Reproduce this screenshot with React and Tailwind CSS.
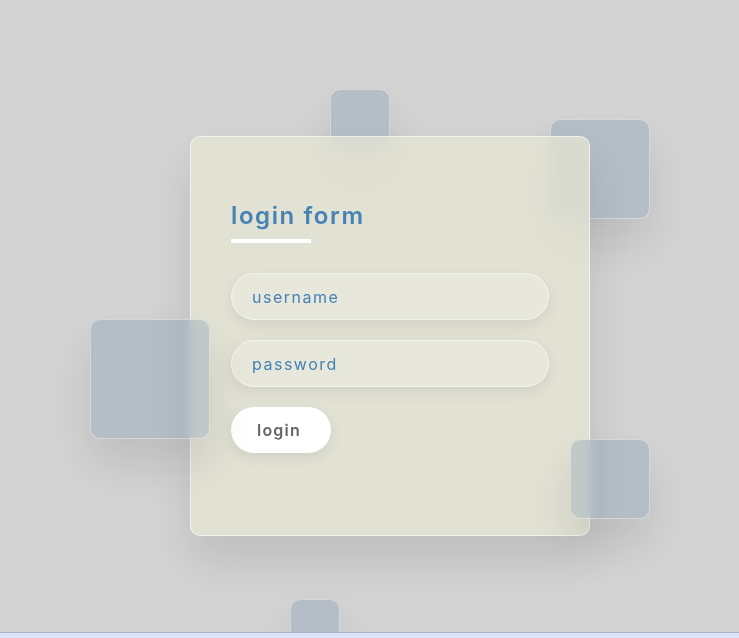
import React from 'react';

const font = { fontFamily: 'Inter, "Noto Sans", sans-serif' };

const Square = ({ className }) => (
  <div
    className={`absolute rounded-[10px] border border-white/40 bg-[rgba(70,115,150,0.21)] shadow-[0_25px_45px_rgba(0,0,0,0.1)] backdrop-blur-[5px] ${className}`}
  />
);

const fieldClass =
  'h-[47px] w-full rounded-[35px] border border-white/50 bg-white/20 px-5 text-[16px] tracking-[1.5px] text-[#4682b4] shadow-[0_5px_15px_rgba(0,0,0,0.08)] outline-none placeholder:text-[#4682b4]';

export default function App() {
  return (
    <div className="flex h-[638px] w-full flex-col bg-[#d3d3d3]" style={font}>
      <div className="relative flex-1 overflow-hidden">
        <div className="relative ml-[190px] mt-[136px] h-[400px] w-[400px]">
          {/* squares behind the card */}
          <Square className="left-[140px] top-[-47px] h-[60px] w-[60px]" />
          <Square className="left-[360px] top-[-17px] h-[100px] w-[100px]" />

          <div className="relative z-10 flex h-full w-full flex-col justify-center rounded-[10px] border border-white/60 bg-[rgba(229,229,212,0.74)] px-10 shadow-[0_25px_45px_rgba(0,0,0,0.1)] backdrop-blur-[5px]">
            <h2 className="relative mb-10 h-[34px] text-[24px] font-semibold leading-[34px] tracking-[1.6px] text-[#4682b4]">
              login form
              <span className="absolute bottom-[-10px] left-0 h-1 w-20 bg-white" />
            </h2>
            <div className="flex flex-col gap-5">
              <input type="text" placeholder="username" className={fieldClass} />
              <input type="password" placeholder="password" className={fieldClass} />
              <button
                type="button"
                className="mb-5 h-[46px] w-[100px] rounded-[35px] bg-white pl-[26px] text-left text-[16px] font-semibold tracking-[1.2px] text-[#666] shadow-[0_5px_15px_rgba(0,0,0,0.08)]"
              >
                login
              </button>
            </div>
          </div>

          {/* squares in front of the card */}
          <Square className="z-20 left-[-100px] top-[183px] h-[120px] w-[120px]" />
          <Square className="z-20 left-[380px] top-[303px] h-[80px] w-[80px]" />
          <Square className="z-20 left-[100px] top-[463px] h-[50px] w-[50px]" />
        </div>
      </div>
      <div className="h-[6px] border-t border-[#aab2cc] bg-[#dde4f8]" />
    </div>
  );
}
